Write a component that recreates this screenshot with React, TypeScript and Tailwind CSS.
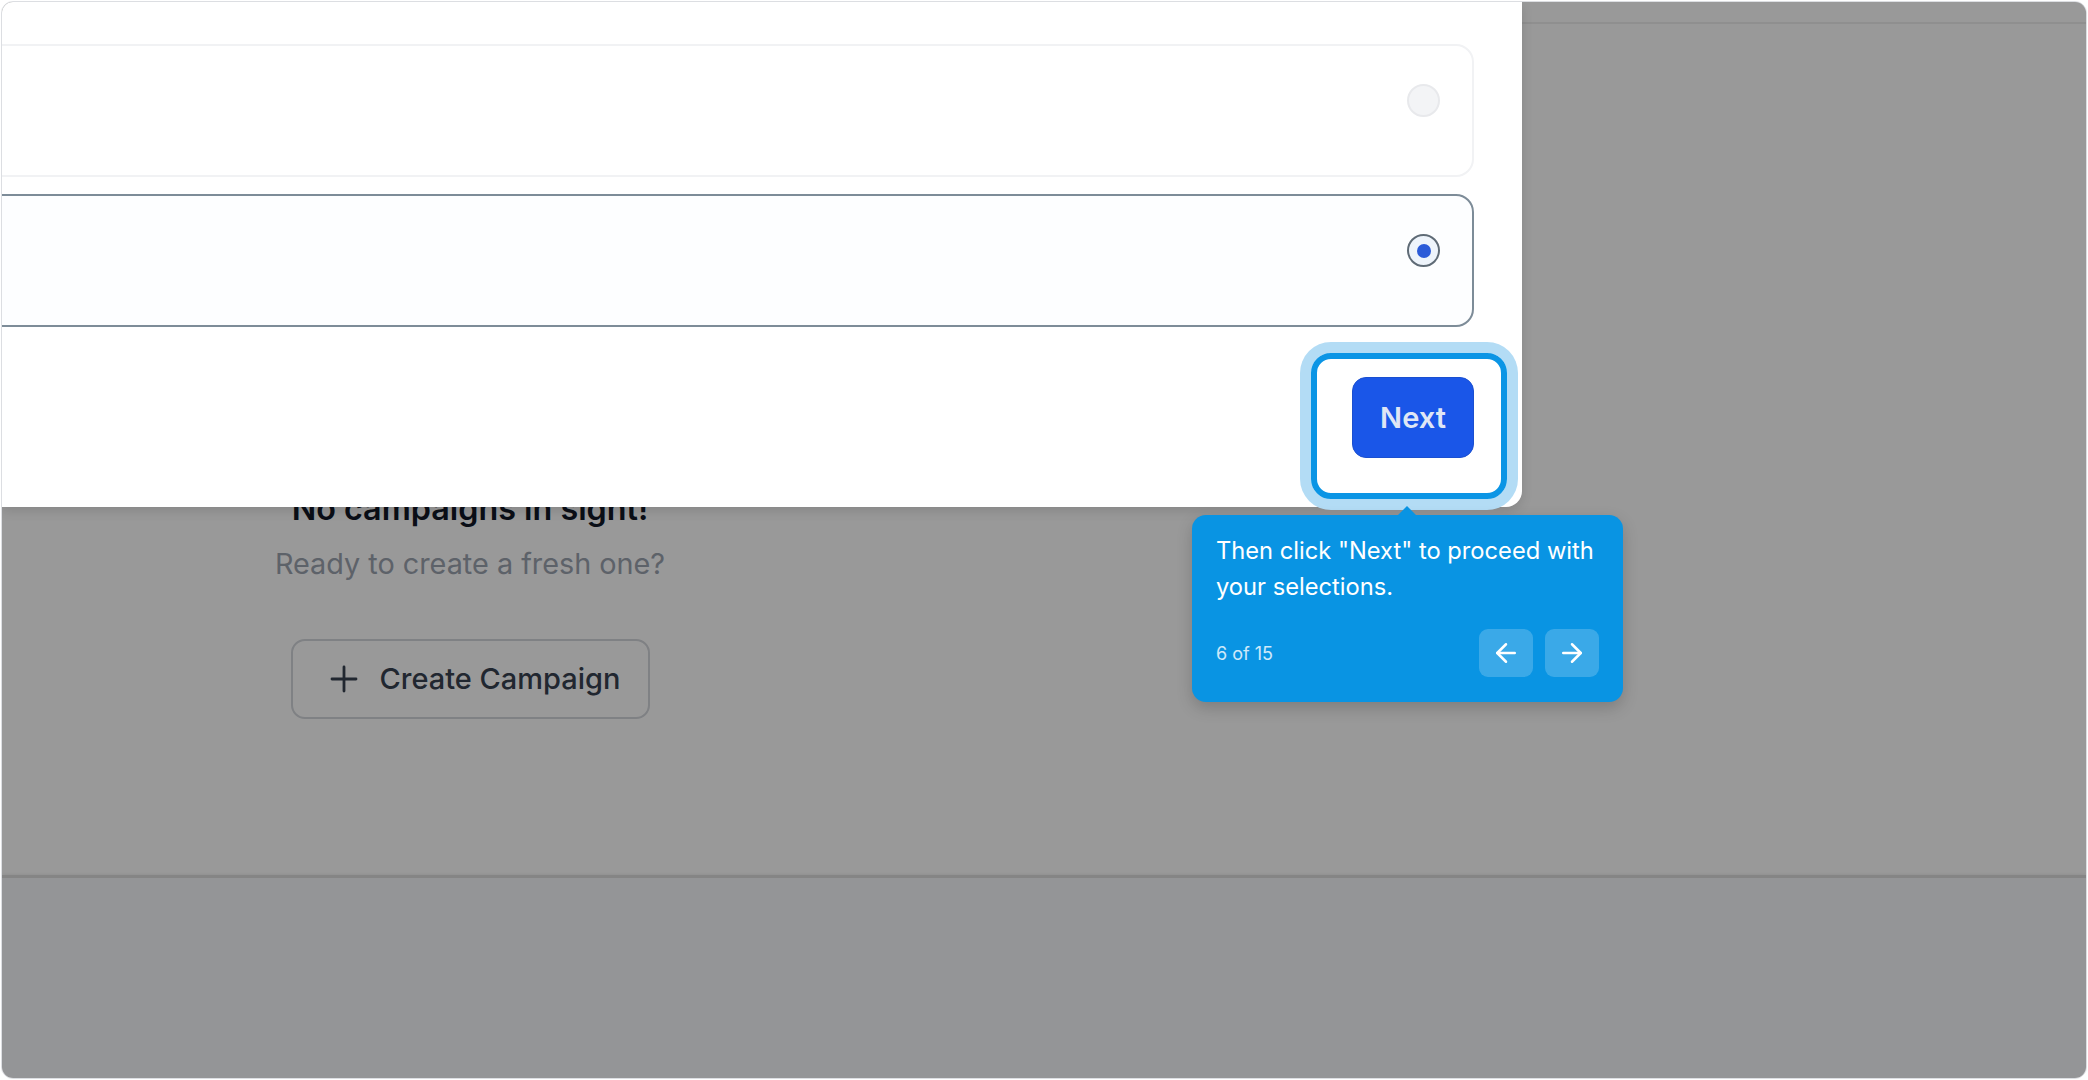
import { ArrowLeft, ArrowRight } from 'lucide-react';

const font = "font-['Inter','Noto_Sans',sans-serif]";

const EmptyState = () => (
  <div className="flex w-[936px] flex-col items-center pt-[465px]">
    <h2 className="text-[32.3px] leading-[40px] font-semibold text-[#111827]">No campaigns in sight!</h2>
    <p className="mt-[17px] text-[28.8px] leading-[36px] text-[#9ca3af]">Ready to create a fresh one?</p>
    <button className="mt-[57px] flex h-[80px] w-[359px] items-center justify-center gap-[22px] rounded-[14px] border-2 border-[#d4d7dc] bg-white pl-[10px] text-[29px] font-medium text-[#374151]">
      <svg width="28" height="28" viewBox="0 0 28 28" fill="none" stroke="currentColor" strokeWidth="2.8" strokeLinecap="round">
        <path d="M14 2v24M2 14h24" />
      </svg>
      Create Campaign
    </button>
  </div>
);

const OptionCard = ({ selected }: { selected?: boolean }) => (
  <div
    className={
      selected
        ? 'flex h-[133px] items-start justify-end rounded-[18px] border-2 border-[#7d8c98] bg-[#fdfeff] pr-[32px] pt-[38px]'
        : 'flex h-[133px] items-start justify-end rounded-[18px] border-2 border-[#f1f2f4] bg-white pr-[32px] pt-[38px]'
    }
  >
    {selected ? (
      <div className="flex h-[33px] w-[33px] items-center justify-center rounded-full border-2 border-[#5f6b76] bg-[#eef4fb]">
        <div className="h-[14px] w-[14px] rounded-full bg-[#2b5bd8]" />
      </div>
    ) : (
      <div className="h-[33px] w-[33px] rounded-full border-2 border-[#e8e9ec] bg-[#f3f4f6]" />
    )}
  </div>
);

export default function App() {
  return (
    <div className={`h-[1080px] w-[2088px] bg-white p-[1px] ${font}`}>
      <div className="relative flex h-full flex-col overflow-hidden rounded-[12px] border border-[#dcdee2] bg-white">
        {/* page under the overlay */}
        <header className="h-[22px] shrink-0 border-b-2 border-[#eeeeee]" />
        <main className="flex flex-1">
          <EmptyState />
        </main>
        <footer className="h-[203px] shrink-0 border-t-[3px] border-[#dedede] bg-[#f7f8fc] shadow-[0_-1px_3px_rgba(0,0,0,0.06)]" />

        {/* dim overlay */}
        <div className="absolute inset-0 bg-black/40" />

        {/* modal, partly scrolled out of view */}
        <div className="absolute left-0 top-0 flex w-[1520px] flex-col rounded-br-[16px] bg-white pb-[49px] pr-[48px] pt-[42px] shadow-[0_4px_12px_rgba(0,0,0,0.12)]">
          <div className="-ml-[40px] flex flex-col gap-[17px]">
            <OptionCard />
            <OptionCard selected />
          </div>
          <div className="mt-[50px] flex justify-end">
            <button className="h-[81px] w-[122px] rounded-[14px] border border-[#1a4fd0] bg-[#1a56e8] text-[29px] font-semibold text-[#dfe6f5]">
              Next
            </button>
          </div>
        </div>

        {/* tour highlight */}
        <div className="absolute left-[1309px] top-[351px] h-[146px] w-[196px] rounded-[20px] border-[6px] border-[#0b95e5] shadow-[0_0_0_11px_#b3dcf5]" />

        {/* tour tooltip */}
        <div className="absolute left-[1190px] top-[513px] w-[431px] rounded-[14px] bg-[#0994e3] px-[24px] pb-[25px] pt-[18px] text-white shadow-[0_6px_16px_rgba(0,0,0,0.18)]">
          <div className="absolute -top-[9px] left-[206px] h-0 w-0 border-x-[9px] border-b-[9px] border-x-transparent border-b-[#0994e3]" />
          <p className="whitespace-nowrap text-[23.7px] leading-[36px]">
            Then click "Next" to proceed with
            <br />
            your selections.
          </p>
          <div className="mt-[24px] flex items-center justify-between">
            <span className="text-[18px] text-white/80">6 of 15</span>
            <div className="flex gap-[12px]">
              <button className="flex h-[48px] w-[54px] items-center justify-center rounded-[9px] bg-white/20">
                <ArrowLeft size={30} strokeWidth={2} />
              </button>
              <button className="flex h-[48px] w-[54px] items-center justify-center rounded-[9px] bg-white/20">
                <ArrowRight size={30} strokeWidth={2} />
              </button>
            </div>
          </div>
        </div>
      </div>
    </div>
  );
}
